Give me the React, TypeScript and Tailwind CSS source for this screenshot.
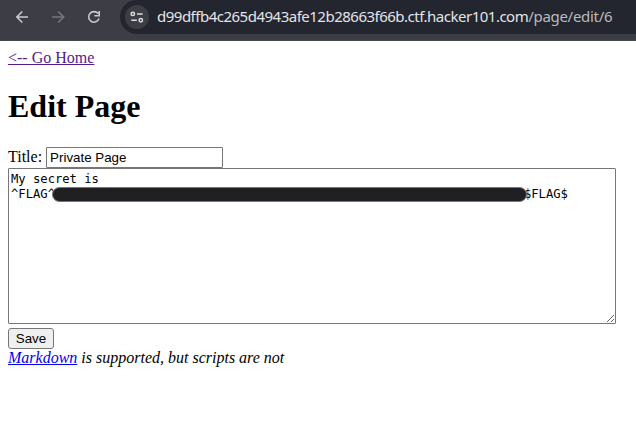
import React from 'react';

const HIDDEN = ' '.repeat(64);

function Toolbar() {
  return (
    <header className="flex h-[41px] items-start overflow-hidden border-b border-[#47464a] bg-[#3c3d45]">
      <svg className="h-[34px] w-[120px] shrink-0" viewBox="0 0 120 34" fill="none" strokeWidth="1.6">
        <path d="M28 17H17M22.3 11.5L16.8 17l5.5 5.5" stroke="#c9cace" />
        <path d="M52 17h11.5M58.2 11.5l5.5 5.5l-5.5 5.5" stroke="#77787d" />
        <path d="M98.1 13.6A5.3 5.3 0 1 0 99 18.6M99.2 11v4.8h-4.8" stroke="#c9cace" />
      </svg>
      <div className="flex h-[34px] flex-1 items-center rounded-l-full bg-[#23262e] pl-[5px]">
        <div className="flex size-6 shrink-0 items-center justify-center rounded-full bg-[#3c3d45]">
          <svg className="size-6" viewBox="0 0 24 24" fill="none" stroke="#dcdde0" strokeWidth="1.5">
            <circle cx="7.8" cy="8.9" r="1.7" />
            <path d="M12 8.9h5.6M6.2 15.3h5.6" />
            <circle cx="15.8" cy="15.3" r="1.7" />
          </svg>
        </div>
        <div className="ml-2 whitespace-nowrap pb-0.5 font-['Noto_Sans',sans-serif] text-[15px] leading-[32px] tracking-[-0.5px] text-[#e3e4e8]">
          d99dffb4c265d4943afe12b28663f66b.ctf.hacker101.com<span className="tracking-[-0.3px] text-[#b9babf]">/page/edit/6</span>
        </div>
      </div>
    </header>
  );
}

export default function App() {
  return (
    <div className="h-[424px] w-[636px] overflow-hidden bg-white font-['Liberation_Serif',serif] text-base leading-[18px] text-black">
      <Toolbar />
      <main className="px-2 pt-2">
        <a href="#" className="block w-fit text-[#551a8b] underline">&lt;-- Go Home</a>
        <h1 className="mt-[21px] text-[32px] font-bold leading-[37px]">Edit Page</h1>
        <form className="mt-[22px]">
          <label className="flex h-[21px] items-center gap-1">
            <span className="pb-px">Title:</span>
            <input
              defaultValue="Private Page"
              className="h-[21px] w-[177px] rounded-[1px] border border-[#767676] px-[3px] font-['Liberation_Sans',sans-serif] text-[13.333px]"
            />
          </label>
          <div className="relative h-[156px] w-[608px]">
            <textarea
              spellCheck={false}
              defaultValue={`My secret is\n^FLAG^${HIDDEN}$FLAG$`}
              className="block size-full resize rounded-[1px] border border-[#767676] px-[2px] pb-[2px] pt-[3px] font-['DejaVu_Sans_Mono',monospace] text-[12.18px] leading-[15px]"
            />
            <div className="absolute left-[44px] top-[19px] h-[15px] w-[475px] rounded-full border border-[#77777a] bg-[#202022]" />
          </div>
          <button
            type="button"
            className="mt-1 block h-[21px] w-[46px] rounded-[3px] border border-[#767676] bg-[#efefef] font-['Liberation_Sans',sans-serif] text-[13.333px] leading-[19px]"
          >
            Save
          </button>
        </form>
        <p className="italic">
          <a href="#" className="text-[#0000ee] underline">Markdown</a> is supported, but scripts are not
        </p>
      </main>
    </div>
  );
}
